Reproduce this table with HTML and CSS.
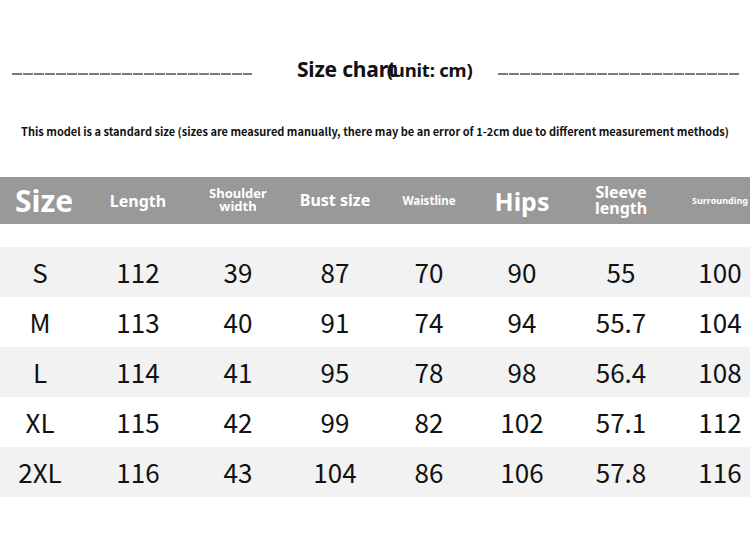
FILE: index.html
```html
<!DOCTYPE html>
<html>
<head>
<meta charset="utf-8">
<link rel="stylesheet" href="styles.css">
</head>
<body>
<div class="page">
  <div class="title-row">
    <span class="dash dash-left"></span>
    <h1 class="title">Size char<span class="t">t</span><span class="unit">(unit: cm)</span></h1>
    <span class="dash dash-right"></span>
  </div>
  <p class="note">This model is a standard size (sizes are measured manually, there may be an error of 1-2cm due to different measurement methods)</p>
  <div class="chart">
    <div class="row head">
      <div class="cell h-size">Size</div>
      <div class="cell h-length">Length</div>
      <div class="cell h-shoulder">Shoulder<br>width</div>
      <div class="cell h-bust">Bust size</div>
      <div class="cell h-waist">Waistline</div>
      <div class="cell h-hips">Hips</div>
      <div class="cell h-sleeve">Sleeve<br>length</div>
      <div class="cell h-surround">Surrounding</div>
    </div>
    <div class="body">
      <div class="row data shade">
        <div class="cell">S</div><div class="cell">112</div><div class="cell">39</div><div class="cell">87</div><div class="cell">70</div><div class="cell">90</div><div class="cell">55</div><div class="cell">100</div>
      </div>
      <div class="row data">
        <div class="cell">M</div><div class="cell">113</div><div class="cell">40</div><div class="cell">91</div><div class="cell">74</div><div class="cell">94</div><div class="cell">55.7</div><div class="cell">104</div>
      </div>
      <div class="row data shade">
        <div class="cell">L</div><div class="cell">114</div><div class="cell">41</div><div class="cell">95</div><div class="cell">78</div><div class="cell">98</div><div class="cell">56.4</div><div class="cell">108</div>
      </div>
      <div class="row data">
        <div class="cell">XL</div><div class="cell">115</div><div class="cell">42</div><div class="cell">99</div><div class="cell">82</div><div class="cell">102</div><div class="cell">57.1</div><div class="cell">112</div>
      </div>
      <div class="row data shade">
        <div class="cell">2XL</div><div class="cell">116</div><div class="cell">43</div><div class="cell">104</div><div class="cell">86</div><div class="cell">106</div><div class="cell">57.8</div><div class="cell">116</div>
      </div>
    </div>
  </div>
</div>
</body>
</html>
```
FILE: styles.css
```css
html, body {
  margin: 0;
  padding: 0;
  background: #ffffff;
  overflow: hidden;
}

.page {
  width: 750px;
  height: 541px;
  font-family: "Noto Sans", "Noto Sans CJK SC", sans-serif;
  color: #111;
}

.title-row {
  display: flex;
  align-items: center;
  height: 40px;
  padding-top: 49px;
}

.dash {
  display: block;
  height: 2px;
  margin-top: 10px;
  background: repeating-linear-gradient(to right, #7a7a7a 0, #7a7a7a 10px, transparent 10px, transparent 11px);
}

.dash-left {
  width: 240px;
  margin-left: 12px;
}

.dash-right {
  width: 241px;
  margin-left: 21px;
}

.title {
  margin: 0 0 0 45px;
  width: 180px;
  font-family: "Noto Sans", sans-serif;
  font-weight: 700;
  font-size: 21px;
  line-height: 24px;
  white-space: nowrap;
  color: #111;
  letter-spacing: -0.2px;
}

.title .unit {
  font-size: 18.5px;
  margin-left: -10px;
  position: relative;
}

.note {
  margin: 35px 0 0 0;
  text-align: center;
  font-family: "Noto Sans CJK SC", sans-serif;
  font-weight: 700;
  font-size: 11px;
  line-height: 14px;
  color: #111;
}

.chart {
  margin-top: 39px;
}

.row {
  display: grid;
  grid-template-columns: 80px 116px 84px 110px 78px 108px 90px 84px;
  align-items: center;
}

.cell {
  text-align: center;
}

.cell:last-child {
  padding-left: 24px;
}

.head {
  height: 47px;
  background: #999999;
  color: #ffffff;
  font-family: "Noto Sans", sans-serif;
  font-weight: 700;
}

.h-size {
  font-size: 30px;
  line-height: 30px;
  padding-left: 8px;
}

.h-length {
  font-size: 16px;
  line-height: 18px;
}

.h-shoulder {
  font-size: 13px;
  line-height: 13px;
  margin-top: -2px;
}

.h-bust {
  font-size: 16px;
  line-height: 18px;
  margin-top: -2px;
}

.h-waist {
  font-size: 11.5px;
  line-height: 14px;
}

.h-hips {
  font-size: 25px;
  line-height: 28px;
}

.h-sleeve {
  font-size: 16px;
  line-height: 16px;
  margin-top: -2px;
}

.h-surround {
  font-size: 9px;
  line-height: 12px;
  white-space: nowrap;
}

.body {
  margin-top: 23px;
}

.data {
  height: 50px;
  font-family: "Noto Sans CJK SC", sans-serif;
  font-weight: 400;
  font-size: 26px;
  line-height: 30px;
  color: #111;
}

.shade {
  background: #f2f2f2;
}
```
